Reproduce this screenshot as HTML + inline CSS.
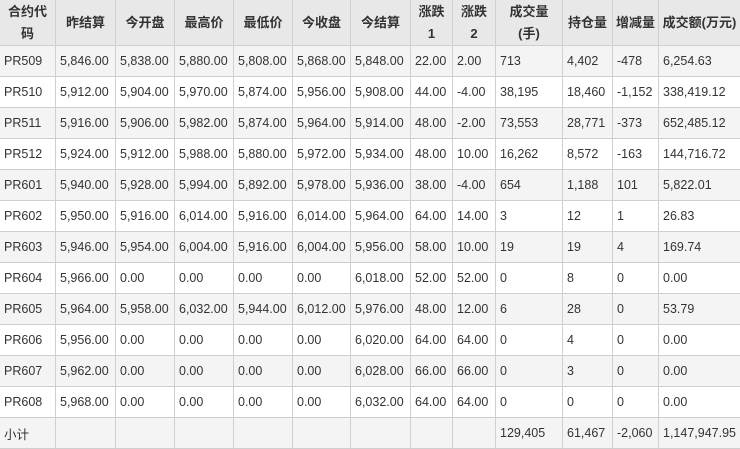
<!DOCTYPE html>
<html><head><meta charset="utf-8"><style>
body{margin:0;background:#fff;}
table{border-collapse:collapse;table-layout:fixed;width:741px;font-family:"Liberation Sans","Noto Sans CJK SC",sans-serif;font-size:12.5px;color:#333;}
td,th{border:1px solid #cfcfcf;padding:0 0 0 4px;white-space:nowrap;overflow:hidden;text-align:left;height:30px;}
th{background:#e8e8e8;font-weight:bold;height:45px;text-align:center;padding:0;line-height:22px;font-size:13px;}
tr.g td{background:#f4f4f4;}
table{margin:-1px 0 0 -1px;}
</style></head><body>
<table>
<colgroup><col style="width:56px"><col style="width:60px"><col style="width:59px"><col style="width:59px"><col style="width:59px"><col style="width:58px"><col style="width:60px"><col style="width:42px"><col style="width:43px"><col style="width:67px"><col style="width:50px"><col style="width:46px"><col style="width:82px"></colgroup>
<tr><th>合约代<br>码</th><th>昨结算</th><th>今开盘</th><th>最高价</th><th>最低价</th><th>今收盘</th><th>今结算</th><th>涨跌<br>1</th><th>涨跌<br>2</th><th>成交量<br>(手)</th><th>持仓量</th><th>增减量</th><th>成交额(万元)</th></tr>
<tr class="g"><td>PR509</td><td>5,846.00</td><td>5,838.00</td><td>5,880.00</td><td>5,808.00</td><td>5,868.00</td><td>5,848.00</td><td>22.00</td><td>2.00</td><td>713</td><td>4,402</td><td>-478</td><td>6,254.63</td></tr>
<tr><td>PR510</td><td>5,912.00</td><td>5,904.00</td><td>5,970.00</td><td>5,874.00</td><td>5,956.00</td><td>5,908.00</td><td>44.00</td><td>-4.00</td><td>38,195</td><td>18,460</td><td>-1,152</td><td>338,419.12</td></tr>
<tr class="g"><td>PR511</td><td>5,916.00</td><td>5,906.00</td><td>5,982.00</td><td>5,874.00</td><td>5,964.00</td><td>5,914.00</td><td>48.00</td><td>-2.00</td><td>73,553</td><td>28,771</td><td>-373</td><td>652,485.12</td></tr>
<tr><td>PR512</td><td>5,924.00</td><td>5,912.00</td><td>5,988.00</td><td>5,880.00</td><td>5,972.00</td><td>5,934.00</td><td>48.00</td><td>10.00</td><td>16,262</td><td>8,572</td><td>-163</td><td>144,716.72</td></tr>
<tr class="g"><td>PR601</td><td>5,940.00</td><td>5,928.00</td><td>5,994.00</td><td>5,892.00</td><td>5,978.00</td><td>5,936.00</td><td>38.00</td><td>-4.00</td><td>654</td><td>1,188</td><td>101</td><td>5,822.01</td></tr>
<tr><td>PR602</td><td>5,950.00</td><td>5,916.00</td><td>6,014.00</td><td>5,916.00</td><td>6,014.00</td><td>5,964.00</td><td>64.00</td><td>14.00</td><td>3</td><td>12</td><td>1</td><td>26.83</td></tr>
<tr class="g"><td>PR603</td><td>5,946.00</td><td>5,954.00</td><td>6,004.00</td><td>5,916.00</td><td>6,004.00</td><td>5,956.00</td><td>58.00</td><td>10.00</td><td>19</td><td>19</td><td>4</td><td>169.74</td></tr>
<tr><td>PR604</td><td>5,966.00</td><td>0.00</td><td>0.00</td><td>0.00</td><td>0.00</td><td>6,018.00</td><td>52.00</td><td>52.00</td><td>0</td><td>8</td><td>0</td><td>0.00</td></tr>
<tr class="g"><td>PR605</td><td>5,964.00</td><td>5,958.00</td><td>6,032.00</td><td>5,944.00</td><td>6,012.00</td><td>5,976.00</td><td>48.00</td><td>12.00</td><td>6</td><td>28</td><td>0</td><td>53.79</td></tr>
<tr><td>PR606</td><td>5,956.00</td><td>0.00</td><td>0.00</td><td>0.00</td><td>0.00</td><td>6,020.00</td><td>64.00</td><td>64.00</td><td>0</td><td>4</td><td>0</td><td>0.00</td></tr>
<tr class="g"><td>PR607</td><td>5,962.00</td><td>0.00</td><td>0.00</td><td>0.00</td><td>0.00</td><td>6,028.00</td><td>66.00</td><td>66.00</td><td>0</td><td>3</td><td>0</td><td>0.00</td></tr>
<tr><td>PR608</td><td>5,968.00</td><td>0.00</td><td>0.00</td><td>0.00</td><td>0.00</td><td>6,032.00</td><td>64.00</td><td>64.00</td><td>0</td><td>0</td><td>0</td><td>0.00</td></tr>
<tr class="g"><td>小计</td><td></td><td></td><td></td><td></td><td></td><td></td><td></td><td></td><td>129,405</td><td>61,467</td><td>-2,060</td><td>1,147,947.95</td></tr>
</table>
</body></html>
